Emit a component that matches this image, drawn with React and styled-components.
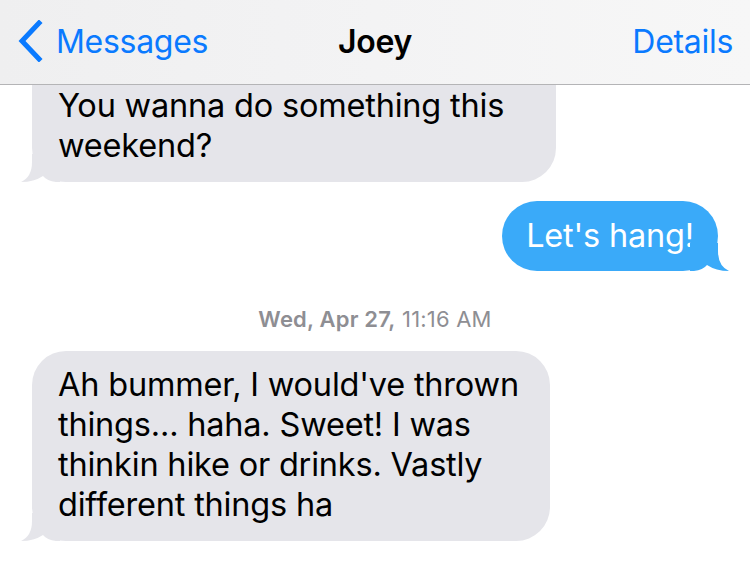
import styled, { createGlobalStyle } from 'styled-components';

const Global = createGlobalStyle`
  html, body {
    margin: 0;
    padding: 0;
    background: #fff;
  }
  body {
    font-family: Inter, "Noto Sans", "Liberation Sans", sans-serif;
    -webkit-font-smoothing: antialiased;
  }
`

const Screen = styled.div`
  width: 750px;
  height: 566px;
  overflow: hidden;
  display: flex;
  flex-direction: column;
  background: #fff;
`

const NavBar = styled.header`
  height: 85px;
  flex: none;
  box-sizing: border-box;
  border-bottom: 1px solid #b4b4b6;
  background: linear-gradient(90deg, #efeff0 0%, #f3f3f4 50%, #f7f7f7 100%);
  display: grid;
  grid-template-columns: 1fr auto 1fr;
  align-items: center;
  padding: 0 17px 0 17px;
  font-size: 32px;
  letter-spacing: -0.3px;
  position: relative;
  z-index: 1;
`

const NavButton = styled.div`
  display: flex;
  align-items: center;
  gap: 13px;
  color: #0a7aff;
  justify-self: ${p => (p.$right ? 'end' : 'start')};
  margin-top: -2px;
`

const Title = styled.div`
  font-weight: 600;
  color: #000;
  margin-top: -2px;
`

// scrolled thread: the first bubble runs up under the nav bar
const Thread = styled.div`
  flex: 1;
  overflow: hidden;
`

const ThreadInner = styled.div`
  margin-top: -53px;
  display: flex;
  flex-direction: column;
`

const Row = styled.div`
  display: flex;
  justify-content: ${p => (p.$mine ? 'flex-end' : 'flex-start')};
  padding: ${p => (p.$mine ? '0 32px 0 0' : '0 0 0 32px')};
  margin-top: ${p => p.$gap || 0}px;
`

const Bubble = styled.div`
  position: relative;
  box-sizing: border-box;
  width: ${p => p.$width}px;
  background: ${p => (p.$mine ? '#3aaaf9' : '#e5e5ea')};
  color: ${p => (p.$mine ? '#fff' : '#000')};
  font-size: 32.5px;
  line-height: 40px;
  letter-spacing: -0.2px;
  border-radius: ${p => (p.$mine ? '35px' : '34px')};
  padding: ${p => (p.$mine ? '15px 0 15px 0' : `${14 + (p.$clipTop || 0)}px 20px 16px 26px`)};
  text-align: ${p => (p.$mine ? 'center' : 'left')};
  white-space: nowrap;
`

const Tail = styled.svg`
  position: absolute;
  bottom: 0;
  width: 40px;
  height: 28px;
  ${p => (p.$mine ? 'right: -12px; transform: scaleX(-1);' : 'left: -12px;')}
`

const Stamp = styled.div`
  margin-top: 36px;
  text-align: center;
  font-size: 22px;
  letter-spacing: 0.2px;
  color: #8e8e93;
  line-height: 24px;
  b {
    font-weight: 600;
  }
`

const BubbleTail = ({ mine, color }) => (
  <Tail $mine={mine} viewBox="0 0 40 28">
    <path d="M12 0 L40 0 L40 28 L36 28 Q 27 27 23 22 Q 14 28 1 28 Q 12 23 12 8 Z" fill={color} />
  </Tail>
)

function App() {
  return (
    <>
      <Global />
      <Screen>
        <NavBar>
          <NavButton>
            <svg width="26" height="42" viewBox="0 0 26 42">
              <path d="M22 3 L5 21 L22 39" fill="none" stroke="#0a7aff" strokeWidth="5" strokeLinecap="square" strokeLinejoin="miter" />
            </svg>
            <span>Messages</span>
          </NavButton>
          <Title>Joey</Title>
          <NavButton $right>Details</NavButton>
        </NavBar>
        <Thread>
          <ThreadInner>
            <Row>
              <Bubble $width={524} $clipTop={40}>
                You wanna do something this
                <br />
                weekend?
                <BubbleTail color="#e5e5ea" />
              </Bubble>
            </Row>
            <Row $mine $gap={19}>
              <Bubble $mine $width={216}>
                Let's hang!
                <BubbleTail mine color="#3aaaf9" />
              </Bubble>
            </Row>
            <Stamp>
              <b>Wed, Apr 27,</b> 11:16 AM
            </Stamp>
            <Row $gap={20}>
              <Bubble $width={518}>
                Ah bummer, I would've thrown
                <br />
                things... haha. Sweet! I was
                <br />
                thinkin hike or drinks. Vastly
                <br />
                different things ha
                <BubbleTail color="#e5e5ea" />
              </Bubble>
            </Row>
          </ThreadInner>
        </Thread>
      </Screen>
    </>
  )
}

export default App;
